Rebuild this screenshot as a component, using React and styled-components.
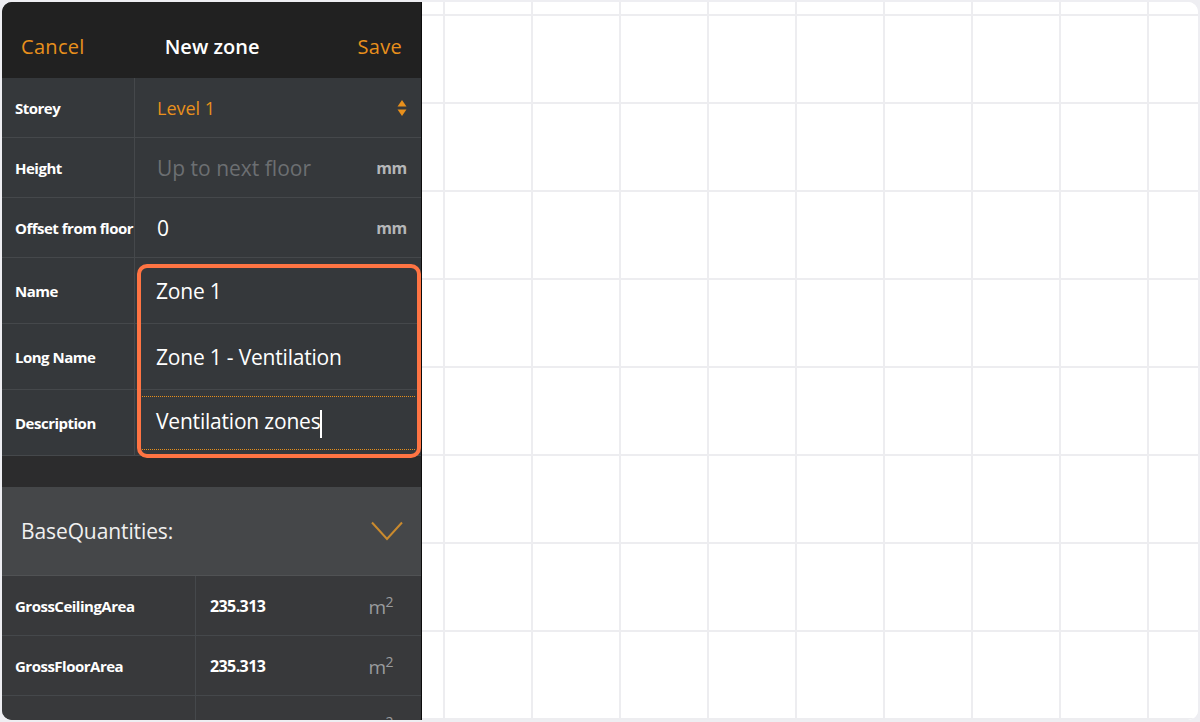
import React from "react";
import styled, { createGlobalStyle } from "styled-components";

const GlobalStyle = createGlobalStyle`
  html, body { margin: 0; padding: 0; background: #eeeef2; }
  body { font-family: "Open Sans", "Noto Sans", sans-serif; }
  * { box-sizing: border-box; }
`;

const ORANGE = "#e8901c";

const Frame = styled.div`
  margin: 2px;
  width: 1196px;
  height: 718px;
  border-radius: 10px;
  overflow: hidden;
  display: flex;
  background: #fff;
`;

const Panel = styled.div`
  width: 420px;
  flex: none;
  display: flex;
  flex-direction: column;
  background: #35383b;
  border-right: 1px solid #0d0d0d;
  overflow: hidden;
`;

const Header = styled.div`
  height: 76px;
  flex: none;
  background: #212121;
  display: flex;
  align-items: center;
  justify-content: space-between;
  padding: 12px 19px 0 19px;
`;

const HeaderButton = styled.span`
  color: ${ORANGE};
  font-size: 20px;
  letter-spacing: 0.3px;
`;

const HeaderTitle = styled.span`
  color: #fff;
  font-size: 20px;
  font-weight: 600;
  letter-spacing: 0px;
  margin-right: 18px;
`;

const Row = styled.div`
  display: grid;
  grid-template-columns: ${(p) => p.$labelWidth || 133}px 1fr;
  height: ${(p) => p.$h || 60}px;
  flex: none;
  background: ${(p) => p.$bg || "#35383b"};
  border-bottom: 1px solid #45484b;
`;

const Label = styled.div`
  display: flex;
  align-items: center;
  padding-left: 13px;
  border-right: 1px solid #45484b;
  color: #fff;
  font-size: 15px;
  font-weight: 700;
  letter-spacing: -0.5px;
  white-space: nowrap;
  overflow: hidden;
`;

const Value = styled.div`
  display: flex;
  align-items: center;
  justify-content: space-between;
  padding: 0 14px 0 ${(p) => p.$pl || 22}px;
  position: relative;
`;

const ValueText = styled.span`
  font-size: ${(p) => p.$size || 21}px;
  font-weight: ${(p) => p.$weight || 500};
  color: ${(p) => p.$color || "#fff"};
  letter-spacing: ${(p) => p.$ls || "-0.2px"};
  white-space: nowrap;
`;

const Unit = styled.span`
  color: #b4b6b8;
  font-size: 16px;
  font-weight: 700;
  letter-spacing: -0.3px;
`;

const FocusedInput = styled.div`
  position: absolute;
  left: 7px;
  right: 6px;
  top: 6px;
  bottom: 5px;
  border-top: 1px dotted ${ORANGE};
  border-bottom: 1px dotted ${ORANGE};
`;

const Caret = styled.span`
  display: inline-block;
  width: 2px;
  height: 28px;
  background: #fff;
  vertical-align: middle;
`;

const HighlightGroup = styled.div`
  position: relative;
  display: flex;
  flex-direction: column;
`;

const Highlight = styled.div`
  position: absolute;
  left: 135px;
  right: 0;
  top: 6px;
  bottom: -2px;
  border: 4px solid #ff7443;
  border-radius: 10px;
  pointer-events: none;
`;

const Spacer = styled.div`
  height: 31px;
  flex: none;
  background: #2c2c2d;
`;

const SectionHeader = styled.div`
  height: 89px;
  flex: none;
  background: #454749;
  display: flex;
  align-items: center;
  justify-content: space-between;
  padding: 0 18px 0 19px;
  border-bottom: 1px solid #505254;
`;

const SectionTitle = styled.span`
  color: #f0f0f0;
  font-size: 21px;
  font-weight: 500;
  letter-spacing: -0.1px;
`;

const Sup = styled.sup`
  font-size: 14px;
  vertical-align: 7px;
`;

const AreaUnit = styled.span`
  color: #9a9c9e;
  font-size: 19px;
  margin-right: 14px;
  letter-spacing: -0.5px;
`;

const Canvas = styled.div`
  flex: 1;
  background-color: #fff;
  background-image:
    linear-gradient(to right, #ededf0 2px, transparent 2px),
    linear-gradient(to bottom, #ededf0 2px, transparent 2px);
  background-size: 88px 88px;
  background-position: 21px 12px;
`;

const UpDown = () => (
  <svg width="10" height="18" viewBox="0 0 10 18">
    <path d="M5 1 L9.5 7.5 H0.5 Z" fill={ORANGE} />
    <path d="M5 17 L9.5 10.5 H0.5 Z" fill={ORANGE} />
  </svg>
);

const Chevron = () => (
  <svg width="32" height="20" viewBox="0 0 32 20">
    <path d="M1 1.5 L16 18 L31 1.5" fill="none" stroke="#c98a2e" strokeWidth="2" />
  </svg>
);

const quantities = [
  ["GrossCeilingArea", "235.313"],
  ["GrossFloorArea", "235.313"],
  ["NetCeilingArea", "235.313"],
];

export default function App() {
  return (
    <>
      <GlobalStyle />
      <Frame>
        <Panel>
          <Header>
            <HeaderButton>Cancel</HeaderButton>
            <HeaderTitle>New zone</HeaderTitle>
            <HeaderButton>Save</HeaderButton>
          </Header>

          <Row>
            <Label>Storey</Label>
            <Value>
              <ValueText $color={ORANGE} $size={18} $weight={400} $ls="0px">Level 1</ValueText>
              <UpDown />
            </Value>
          </Row>
          <Row>
            <Label>Height</Label>
            <Value>
              <ValueText $color="#6c6f72" $weight={400} $ls="0px">Up to next floor</ValueText>
              <Unit>mm</Unit>
            </Value>
          </Row>
          <Row>
            <Label>Offset from floor</Label>
            <Value>
              <ValueText>0</ValueText>
              <Unit>mm</Unit>
            </Value>
          </Row>

          <HighlightGroup>
            <Row $h={66}>
              <Label>Name</Label>
              <Value $pl={21}>
                <ValueText>Zone 1</ValueText>
              </Value>
            </Row>
            <Row $h={66}>
              <Label>Long Name</Label>
              <Value $pl={21}>
                <ValueText>Zone 1 - Ventilation</ValueText>
              </Value>
            </Row>
            <Row $h={66}>
              <Label>Description</Label>
              <Value $pl={21}>
                <FocusedInput />
                <ValueText>
                  Ventilation zones<Caret />
                </ValueText>
              </Value>
            </Row>
            <Highlight />
          </HighlightGroup>

          <Spacer />

          <SectionHeader>
            <SectionTitle>BaseQuantities:</SectionTitle>
            <Chevron />
          </SectionHeader>

          {quantities.map(([name, val]) => (
            <Row key={name} $labelWidth={194} $bg="#38393b">
              <Label>{name}</Label>
              <Value $pl={14}>
                <ValueText $size={16} $weight={700} $ls="-0.6px">{val}</ValueText>
                <AreaUnit>
                  m<Sup>2</Sup>
                </AreaUnit>
              </Value>
            </Row>
          ))}
        </Panel>
        <Canvas />
      </Frame>
    </>
  );
}
